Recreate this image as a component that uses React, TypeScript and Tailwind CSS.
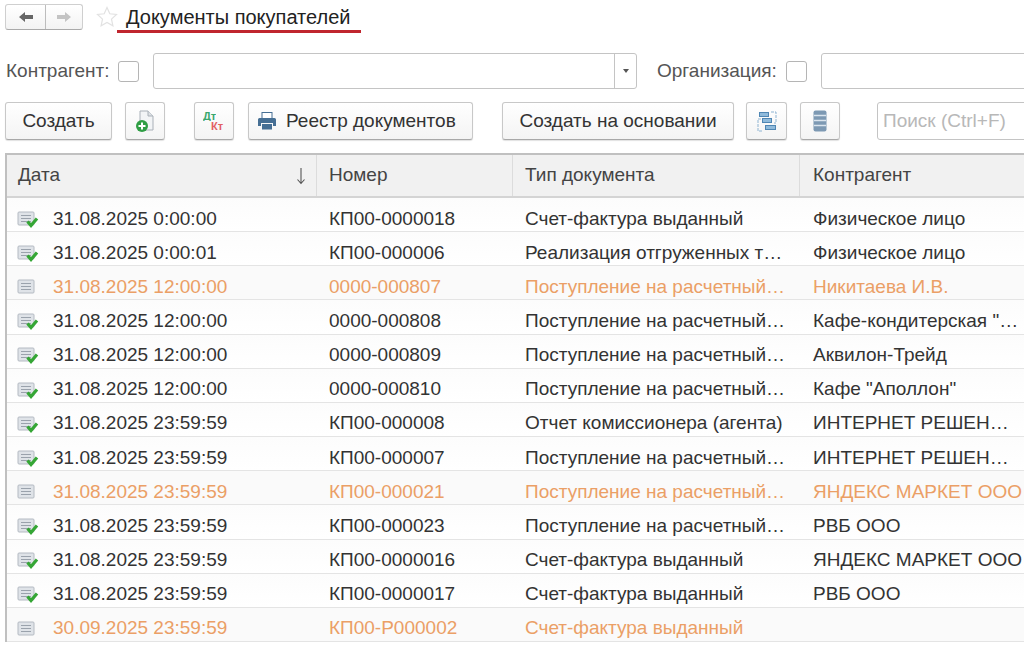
import { ReactNode } from "react";

const columns = "grid grid-cols-[310px_196px_287px_225px]";

const rows = [
  { posted: true, date: "31.08.2025 0:00:00", num: "КП00-0000018", type: "Счет-фактура выданный", who: "Физическое лицо" },
  { posted: true, date: "31.08.2025 0:00:01", num: "КП00-000006", type: "Реализация отгруженных т…", who: "Физическое лицо" },
  { posted: false, date: "31.08.2025 12:00:00", num: "0000-000807", type: "Поступление на расчетный…", who: "Никитаева И.В." },
  { posted: true, date: "31.08.2025 12:00:00", num: "0000-000808", type: "Поступление на расчетный…", who: 'Кафе-кондитерская "…' },
  { posted: true, date: "31.08.2025 12:00:00", num: "0000-000809", type: "Поступление на расчетный…", who: "Аквилон-Трейд" },
  { posted: true, date: "31.08.2025 12:00:00", num: "0000-000810", type: "Поступление на расчетный…", who: 'Кафе "Аполлон"' },
  { posted: true, date: "31.08.2025 23:59:59", num: "КП00-000008", type: "Отчет комиссионера (агента)", who: "ИНТЕРНЕТ РЕШЕН…" },
  { posted: true, date: "31.08.2025 23:59:59", num: "КП00-000007", type: "Поступление на расчетный…", who: "ИНТЕРНЕТ РЕШЕН…" },
  { posted: false, date: "31.08.2025 23:59:59", num: "КП00-000021", type: "Поступление на расчетный…", who: "ЯНДЕКС МАРКЕТ ООО" },
  { posted: true, date: "31.08.2025 23:59:59", num: "КП00-000023", type: "Поступление на расчетный…", who: "РВБ ООО" },
  { posted: true, date: "31.08.2025 23:59:59", num: "КП00-0000016", type: "Счет-фактура выданный", who: "ЯНДЕКС МАРКЕТ ООО" },
  { posted: true, date: "31.08.2025 23:59:59", num: "КП00-0000017", type: "Счет-фактура выданный", who: "РВБ ООО" },
  { posted: false, date: "30.09.2025 23:59:59", num: "КП00-Р000002", type: "Счет-фактура выданный", who: "" },
];

function Btn({ className, children }: { className: string; children: ReactNode }) {
  return (
    <div className={`h-[38px] shrink-0 flex items-center rounded-[3px] border border-[#c8c8c8] border-b-[#a8a8a8] bg-gradient-to-b from-white to-[#f4f4f4] shadow-[0_1px_1px_rgba(0,0,0,0.12)] text-[#333] ${className}`}>
      {children}
    </div>
  );
}

function Checkbox({ className }: { className: string }) {
  return <div className={`w-[21px] h-[21px] shrink-0 rounded-[3px] border border-[#b5b5b5] bg-white ${className}`} />;
}

function DocIcon({ posted }: { posted: boolean }) {
  return (
    <svg width="22" height="18" viewBox="0 0 22 18" className="shrink-0">
      <rect x="1" y="2" width="16" height="13" rx="1" fill="#dfe3e8" stroke="#b4bac2" />
      <path d="M4 5.500h10M4 8.500h10M4 11.500h10" stroke="#9aa2ac" strokeWidth="1.200" />
      {posted && <path d="M10.500 11.500l3.500 4 6-7" fill="none" stroke="#35a635" strokeWidth="3.200" />}
    </svg>
  );
}

function Row({ posted, date, num, type, who }: (typeof rows)[number]) {
  return (
    <div className={`${columns} h-[34.17px] items-center pt-[6.5px] border-b border-[#e4e4e4] text-[19px] whitespace-nowrap ${posted ? "bg-gradient-to-b from-[#fcfcfc] to-white text-[#333]" : "bg-[#fafafa] text-[#eb9f66]"}`}>
      <div className="flex items-center pl-[10px]">
        <DocIcon posted={posted} />
        <span className="ml-[14px]">{date}</span>
      </div>
      <div className="pl-[12px]">{num}</div>
      <div className="pl-[12px]">{type}</div>
      <div className="pl-[13px]">{who}</div>
    </div>
  );
}

export default function App() {
  return (
    <div className="w-[1024px] h-[650px] overflow-hidden bg-white font-['Liberation_Sans',Arial,sans-serif] text-[#333]">
      {/* Title */}
      <div className="flex items-start h-[53px] pt-[4px] pl-[5px]">
        <div className="flex w-[78px] h-[26px] rounded-[3px] border border-[#cfcfcf] border-b-[#aaa] bg-gradient-to-b from-white to-[#f3f3f3]">
          <div className="w-[40px] flex items-center justify-center border-r border-[#bdbdbd]">
            <svg width="16" height="12" viewBox="0 0 16 12">
              <path d="M1 6l6-5v3h8v4H7v3z" fill="#666" />
            </svg>
          </div>
          <div className="flex-1 flex items-center justify-center">
            <svg width="16" height="12" viewBox="0 0 16 12">
              <path d="M15 6L9 1v3H1v4h8v3z" fill="#c4c4c4" />
            </svg>
          </div>
        </div>
        <svg width="22" height="22" viewBox="0 0 22 22" className="ml-[13px] mt-[2px] shrink-0">
          <path d="M11 1.500l2.800 6.300 6.700.7-5 4.600 1.400 6.700L11 16.400l-5.900 3.400 1.400-6.700-5-4.600 6.700-.7z" fill="none" stroke="#e2e2e2" strokeWidth="1.200" />
        </svg>
        <div className="-ml-[1px] w-[244px] h-[29px] shrink-0 border-b-[3px] border-[#c0262e] pl-[9px] pt-[1px] text-[20px] leading-[25px] text-[#222] whitespace-nowrap">
          Документы покупателей
        </div>
      </div>

      {/* Filters */}
      <div className="flex items-center h-[36px] pl-[6px] text-[19px] text-[#555] whitespace-nowrap">
        <span className="w-[103px] shrink-0">Контрагент:</span>
        <Checkbox className="ml-[9px]" />
        <div className="ml-[14px] w-[484px] h-[36px] shrink-0 flex justify-end rounded-[3px] border border-[#c4c4c4] bg-white">
          <div className="w-[22px] flex items-center justify-center border-l border-[#c4c4c4]">
            <div className="w-0 h-0 border-x-[3px] border-x-transparent border-t-[4px] border-t-[#555]" />
          </div>
        </div>
        <span className="ml-[20px] w-[120px] shrink-0">Организация:</span>
        <Checkbox className="ml-[9px]" />
        <div className="ml-[14px] w-[220px] h-[36px] shrink-0 rounded-[3px] border border-[#c4c4c4] bg-white" />
      </div>

      {/* Toolbar */}
      <div className="flex items-center h-[38px] mt-[13px] pl-[5px] text-[19px] whitespace-nowrap">
        <Btn className="w-[107px] justify-center">Создать</Btn>
        <Btn className="ml-[13px] w-[40px] justify-center">
          <svg width="20" height="24" viewBox="0 0 20 24">
            <path d="M5 2h8l5 5v14H5z" fill="#f2f4f6" stroke="#a9b0b8" />
            <path d="M13 2v5h5" fill="#dde1e5" stroke="#a9b0b8" />
            <circle cx="7" cy="17" r="6" fill="#2f9e44" />
            <path d="M7 13.500v7M3.500 17h7" stroke="#fff" strokeWidth="2" />
          </svg>
        </Btn>
        <Btn className="ml-[29px] w-[40px] justify-center">
          <div className="flex flex-col w-[22px] text-[11px] leading-[10px] font-bold">
            <span className="h-[10px] w-[13px] overflow-hidden text-[#3aa76d]">Дт</span>
            <span className="ml-[8px] text-[#e25f63]">Кт</span>
          </div>
        </Btn>
        <Btn className="ml-[14px] w-[225px] pl-[8px]">
          <svg width="20" height="20" viewBox="0 0 20 20" className="mr-[9px] shrink-0">
            <rect x="5" y="1.500" width="10" height="6" fill="#fff" stroke="#466f94" />
            <path d="M1 8.500a1.500 1.500 0 011.500-1.500h15A1.500 1.500 0 0119 8.500V15h-3v-3H4v3H1z" fill="#466f94" />
            <rect x="5" y="13" width="10" height="5.500" fill="#466f94" />
          </svg>
          Реестр документов
        </Btn>
        <Btn className="ml-[29px] w-[232px] justify-center">Создать на основании</Btn>
        <Btn className="ml-[12px] w-[41px] justify-center">
          <svg width="20" height="21" viewBox="0 0 20 21">
            <path d="M4 8H1v12h5M14 1h5v11h-2" fill="none" stroke="#8fb4d2" strokeDasharray="3 1" />
            <rect x="2.500" y="1.500" width="9" height="4" fill="#8fbadb" stroke="#4f86b3" />
            <rect x="5.500" y="7.500" width="9" height="4" fill="#8fbadb" stroke="#4f86b3" />
            <rect x="8.500" y="14.500" width="10" height="4" fill="#8fbadb" stroke="#4f86b3" />
          </svg>
        </Btn>
        <Btn className="ml-[13px] w-[40px] justify-center">
          <svg width="14" height="22" viewBox="0 0 14 22">
            <rect x="0.500" y="0.500" width="13" height="21" rx="2" fill="#7d99b3" />
            <path d="M1 5.500h12M1 10.500h12M1 15.500h12" stroke="#dbe5ee" strokeWidth="1.500" />
          </svg>
        </Btn>
        <div className="ml-[37px] w-[160px] h-[38px] shrink-0 flex items-center pl-[5px] rounded-[3px] border border-[#c4c4c4] text-[#b8b8b8] bg-white">
          Поиск (Ctrl+F)
        </div>
      </div>

      {/* Table */}
      <div className="mt-[13px] ml-[5px] border-l-2 border-t-2 border-[#c0c0c0]">
        <div className={`${columns} h-[43px] items-center bg-[#f1f1f1] border-b-2 border-[#d4d4d4] text-[19px] text-[#444]`}>
          <div className="flex h-full items-center justify-between pl-[11px] pr-[10px] border-r border-[#dcdcdc]">
            <span>Дата</span>
            <svg width="10" height="18" viewBox="0 0 10 18">
              <path d="M5 1v15M1.500 12.500L5 16.500l3.500-4" fill="none" stroke="#555" strokeWidth="1.100" />
            </svg>
          </div>
          <div className="flex h-full items-center pl-[12px] border-r border-[#dcdcdc]">Номер</div>
          <div className="flex h-full items-center pl-[12px] border-r border-[#dcdcdc]">Тип документа</div>
          <div className="flex h-full items-center pl-[13px]">Контрагент</div>
        </div>
        {rows.map((r, i) => (
          <Row key={i} {...r} />
        ))}
      </div>
    </div>
  );
}
